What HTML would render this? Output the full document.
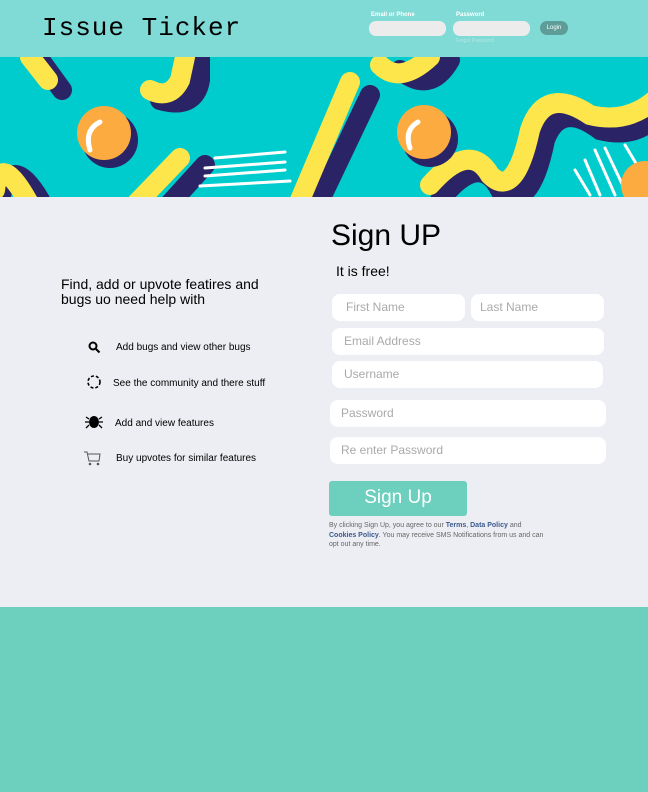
<!DOCTYPE html>
<html><head><meta charset="utf-8"><style>
*{margin:0;padding:0;box-sizing:border-box}
body{width:648px;height:792px;overflow:hidden;font-family:"Liberation Sans",sans-serif;background:#6dcfbd;position:relative}
.hdr{position:absolute;left:0;top:0;width:648px;height:57px;background:#80dbd6}
.logo{position:absolute;left:42px;top:13px;font-family:"Liberation Mono",monospace;font-size:26px;letter-spacing:1px;color:#000}
.lbl{position:absolute;font-size:6px;color:#fff;font-weight:bold}
.hin{position:absolute;height:15px;background:#ececec;border-radius:7px}
.ban{position:absolute;left:0;top:57px;width:648px;height:140px;background:#00cccd;overflow:hidden}
.main{position:absolute;left:0;top:197px;width:648px;height:410px;background:#edeef3}
.abs{position:absolute}
.in{position:absolute;height:27px;background:#fff;border-radius:8px;color:#aaa;font-size:12px;line-height:27px;padding-left:12px}
.feat{position:absolute;font-size:10px;color:#000}
</style></head><body>
<div class="hdr">
<div class="logo">Issue Ticker</div>
<div class="lbl" style="left:371px;top:12px">Email or Phone</div>
<div class="lbl" style="left:456px;top:12px">Password</div>
<div class="hin" style="left:369px;top:21px;width:77px"></div>
<div class="hin" style="left:453px;top:21px;width:77px"></div>
<div class="abs" style="left:540px;top:21px;width:28px;height:14px;background:#5e9c98;border-radius:7px;color:#fff;font-size:6px;line-height:14px;text-align:center">Login</div>
<div class="abs" style="left:456px;top:38px;font-size:5px;color:#b5e6e2">Forgot Password</div>
</div>
<div class="ban"><svg width="648" height="140" viewBox="0 57 648 140">
<g fill="none" stroke-linecap="round" stroke-width="20">
<path d="M38 57 L62 90" stroke="#2a2467"/><path d="M30 57 L48 80" stroke="#fde64b"/>
<path d="M200 57 L200 80 Q195 110 160 100" stroke="#2a2467"/><path d="M185 57 L180 80 Q170 100 150 90" stroke="#fde64b"/>
<path d="M370 95 L320 200" stroke="#2a2467"/><path d="M350 82 L300 200" stroke="#fde64b"/>
<path d="M155 220 L205 165" stroke="#2a2467"/><path d="M130 210 L180 158" stroke="#fde64b"/>
<path d="M0 200 Q10 150 40 200" stroke="#2a2467"/><path d="M-5 190 Q0 150 30 205" stroke="#fde64b"/>
<path d="M400 70 Q430 95 450 60" stroke="#2a2467"/><path d="M380 65 Q400 85 430 57" stroke="#fde64b"/>
<path d="M440 200 Q480 150 500 190 Q530 215 545 140 Q560 100 600 130 Q640 140 660 110" stroke="#2a2467"/>
<path d="M430 185 Q470 140 490 175 Q515 200 530 130 Q545 85 590 115 Q630 125 660 95" stroke="#fde64b"/>
</g>
<g stroke="#fff" stroke-width="3" stroke-linecap="round">
<path d="M215 158 L285 152"/><path d="M205 168 L285 162"/><path d="M205 176 L285 170"/><path d="M200 186 L290 181"/>
<path d="M585 160 L600 195"/><path d="M595 150 L615 195"/><path d="M605 148 L625 190"/><path d="M625 145 L640 170"/><path d="M575 170 L590 195"/>
</g>
<circle cx="110" cy="140" r="28" fill="#2a2467"/><circle cx="104" cy="133" r="27" fill="#fbab40"/>
<path d="M90 150 Q84 130 100 122" stroke="#fff" stroke-width="5" fill="none" stroke-linecap="round"/>
<circle cx="430" cy="139" r="28" fill="#2a2467"/><circle cx="424" cy="132" r="27" fill="#fbab40"/>
<path d="M410 148 Q404 130 418 122" stroke="#fff" stroke-width="5" fill="none" stroke-linecap="round"/>
<circle cx="645" cy="185" r="24" fill="#fbab40"/>
</svg></div>
<div class="main">
<div class="abs" style="left:61px;top:80px;font-size:14px;line-height:15px;color:#000;width:220px">Find, add or upvote featires and bugs uo need help with</div>
<svg class="abs" style="left:88px;top:144px" width="13" height="13" viewBox="0 0 13 13"><circle cx="5" cy="5" r="3.5" stroke="#000" stroke-width="2" fill="none"/><path d="M8 8 L11.5 11.5" stroke="#000" stroke-width="2"/></svg>
<div class="feat" style="left:116px;top:145px">Add bugs and view other bugs</div>
<svg class="abs" style="left:86px;top:177px" width="16" height="16"><circle cx="8" cy="8" r="6" stroke="#000" stroke-width="1.6" fill="none" stroke-dasharray="3 2"/></svg>
<div class="feat" style="left:113px;top:181px">See the community and there stuff</div>
<svg class="abs" style="left:85px;top:216px" width="18" height="16" viewBox="0 0 18 16"><ellipse cx="9" cy="9" rx="5" ry="6" fill="#000"/><g stroke="#000" stroke-width="1.3"><path d="M4 6 L1 4M4 9 L0 9M4 12 L1 15M14 6 L17 4M14 9 L18 9M14 12 L17 15"/></g></svg>
<div class="feat" style="left:115px;top:221px">Add and view features</div>
<svg class="abs" style="left:83px;top:254px" width="19" height="15" viewBox="0 0 19 15"><path d="M1 1 L4 1 L6 10 L16 10 L17 3 L5 3" stroke="#555" fill="none"/><circle cx="7" cy="13" r="1.3" fill="#555"/><circle cx="15" cy="13" r="1.3" fill="#555"/></svg>
<div class="feat" style="left:116px;top:256px">Buy upvotes for similar features</div>

<div class="abs" style="left:331px;top:22px;font-size:30px;color:#000">Sign UP</div>
<div class="abs" style="left:336px;top:66px;font-size:14px;color:#000">It is free!</div>
<div class="in" style="left:332px;top:97px;width:133px;padding-left:14px">First Name</div>
<div class="in" style="left:471px;top:97px;width:133px;padding-left:9px">Last Name</div>
<div class="in" style="left:332px;top:131px;width:272px">Email Address</div>
<div class="in" style="left:332px;top:164px;width:271px">Username</div>
<div class="in" style="left:330px;top:203px;width:276px;padding-left:11px">Password</div>
<div class="in" style="left:330px;top:240px;width:276px;padding-left:11px">Re enter Password</div>
<div class="abs" style="left:329px;top:284px;width:138px;height:35px;background:#6dcfbd;border-radius:3px;color:#fff;font-size:19px;line-height:33px;text-align:center">Sign Up</div>
<div class="abs" style="left:329px;top:324px;width:218px;font-size:7px;line-height:9.5px;color:#666">By clicking Sign Up, you agree to our <b style="color:#3b5a8f">Terms</b>, <b style="color:#3b5a8f">Data Policy</b> and <b style="color:#3b5a8f">Cookies Policy</b>. You may receive SMS Notifications from us and can opt out any time.</div>
</div>
</body></html>
